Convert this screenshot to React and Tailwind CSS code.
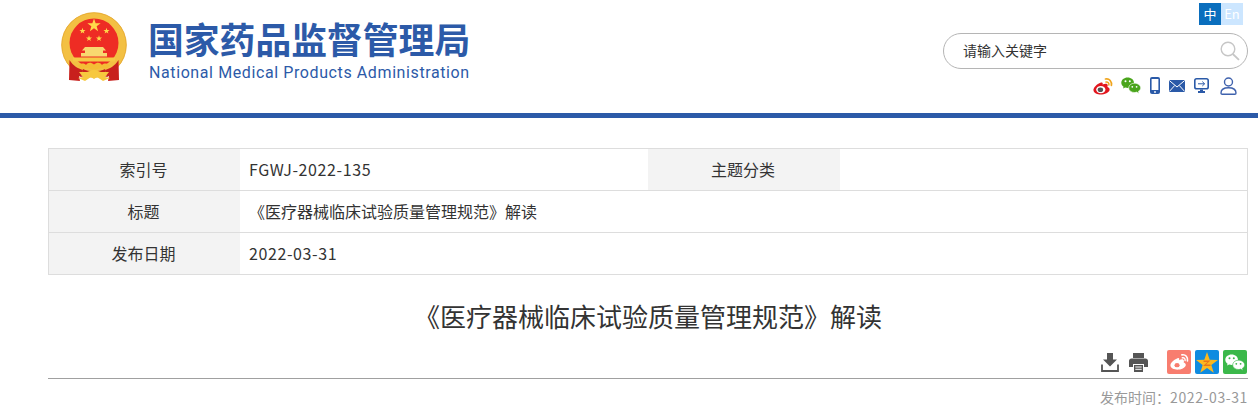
const CJK = { fontFamily: '"Noto Sans CJK SC", "Noto Sans", sans-serif' };

function Star({ cx, cy, r, fill = "#ffd84a", rot = 0 }) {
  const pts = [];
  for (let i = 0; i < 10; i++) {
    const rad = i % 2 === 0 ? r : r * 0.4;
    const a = ((-90 + rot + i * 36) * Math.PI) / 180;
    pts.push(`${(cx + rad * Math.cos(a)).toFixed(2)},${(cy + rad * Math.sin(a)).toFixed(2)}`);
  }
  return <polygon points={pts.join(" ")} fill={fill} />;
}

function Emblem() {
  return (
    <svg width="66" height="70" viewBox="0 0 66 70">
      <circle cx="33" cy="33" r="32.5" fill="#f3c043" />
      <circle cx="33" cy="33" r="32.3" fill="none" stroke="#e3a52c" strokeWidth="0.8" />
      <circle cx="33" cy="31" r="24.5" fill="#ee2c24" />
      <Star cx={33} cy={13.5} r={7} />
      <Star cx={21.5} cy={19} r={3.2} />
      <Star cx={45.5} cy={19} r={3.2} />
      <Star cx={28} cy={26.5} r={3.2} />
      <Star cx={38} cy={26.5} r={3.2} />
      <path d="M24 35 H42 L45 38.5 H42 V41 H46 V44.5 H20 V41 H24 V38.5 H21 Z" fill="#f8d870" />
      <path d="M12 45.5 H54 V49.5 H12 Z" fill="#f6c945" />
      <path d="M8.5 48 C12 54 18 57 22 58 L20 65 L18 64 L19 69 L8 68 Z" fill="#c8201d" />
      <path d="M57.5 48 C54 54 48 57 44 58 L46 65 L48 64 L47 69 L58 68 Z" fill="#c8201d" />
      <path d="M22 57 C27 60 39 60 44 57 L46 65 L39 63 L33 61 L27 63 L20 65 Z" fill="#c8201d" />
      <path d="M17 54 C19 51 23 51 25 53 C27 50 30 50 33 52.5 C36 50 39 50 41 53 C43 51 47 51 49 54 L45 57 L40 56 L33 58 L26 56 L21 57 Z" fill="#f4bd35" />
      <path d="M18 60 H26 L33 57.5 L40 60 H48 L44 65 L49 66 L42 69 L36 65 L33 67 L30 65 L24 69 L17 66 L22 65 Z" fill="#f7c83f" />
    </svg>
  );
}

function WeiboIcon({ color = "#e2161e", eye = "#555", wave = "#f0a51e", size = 20 }) {
  return (
    <svg width={size} height={size * 0.9} viewBox="0 0 20 18">
      <path d="M8 5.5 C3.5 7 0 11 0.5 13.5 C1 16.5 5 17.8 9 17.5 C13.5 17 17 14.6 16.6 12 C16.4 10.8 15.3 10.2 14.4 9.9 C14.9 8.6 14.8 7.5 14 7 C12.9 6.3 10.9 7 9.5 7.6 C10 6.4 9.9 5 8 5.5 Z" fill={color} />
      <ellipse cx="7.8" cy="12.6" rx="4.6" ry="3.6" fill="#fff" />
      <ellipse cx="7.4" cy="12.8" rx="2.7" ry="2.3" fill={eye} />
      <path d="M12.5 2 C16.5 1.2 19 4.5 18.4 8.4" fill="none" stroke={wave} strokeWidth="1.7" strokeLinecap="round" />
      <path d="M13 5 C15 4.6 16.2 6.2 15.9 8" fill="none" stroke={wave} strokeWidth="1.5" strokeLinecap="round" />
    </svg>
  );
}

function WechatIcon({ c1 = "#4aa51c", c2 = "#4aa51c", dot = "#fff", w = 20, h = 17 }) {
  return (
    <svg width={w} height={h} viewBox="0 0 20 17">
      <path d="M6.6 0.5 C3 0.5 0.3 2.8 0.3 5.7 C0.3 7.3 1.2 8.7 2.6 9.7 L2 11.6 L4.2 10.5 C5.2 10.8 6 10.9 7 10.9 C8 10.9 13 8 13 5.7 C13 2.8 10.2 0.5 6.6 0.5 Z" fill={c1} />
      <path d="M13.4 6.2 C10.2 6.2 7.7 8.3 7.7 10.9 C7.7 13.5 10.2 15.5 13.4 15.5 C14.2 15.5 14.9 15.4 15.6 15.1 L18 16.6 L17.4 14.3 C18.8 13.4 19.7 12.2 19.7 10.9 C19.7 8.3 16.7 6.2 13.4 6.2 Z" fill={c2} stroke={dot} strokeWidth="0.6" />
      <circle cx="4.5" cy="4.2" r="1" fill={dot} />
      <circle cx="8.8" cy="4.2" r="1" fill={dot} />
      <circle cx="11.3" cy="9.8" r="0.9" fill={dot} />
      <circle cx="15.6" cy="9.8" r="0.9" fill={dot} />
    </svg>
  );
}

function Phone() {
  return (
    <svg width="10" height="17" viewBox="0 0 10 17">
      <rect x="0" y="0" width="10" height="17" rx="2" fill="#2b5aa8" />
      <rect x="1.6" y="2" width="6.8" height="11" fill="#fff" />
      <circle cx="5" cy="15" r="0.9" fill="#fff" />
    </svg>
  );
}

function Mail() {
  return (
    <svg width="16" height="12" viewBox="0 0 16 12">
      <rect width="16" height="12" rx="0.5" fill="#2b5aa8" />
      <path d="M0.3 0.5 L8 7 L15.7 0.5 M0.3 11.5 L5.7 5.5 M15.7 11.5 L10.3 5.5" fill="none" stroke="#fff" strokeWidth="1" />
    </svg>
  );
}

function Monitor() {
  return (
    <svg width="15" height="15" viewBox="0 0 15 15">
      <rect x="0.8" y="0.8" width="13.4" height="10" rx="1.8" fill="#fff" stroke="#2b5aa8" strokeWidth="1.6" />
      <path d="M4 5.8 H10.5 M8.3 3.6 L10.6 5.8 L8.3 8" fill="none" stroke="#2b5aa8" strokeWidth="1" />
      <path d="M6 11.5 H9 V13 H11 V15 H4 V13 H6 Z" fill="#2b5aa8" />
    </svg>
  );
}

function User() {
  return (
    <svg width="17" height="18" viewBox="0 0 17 18">
      <circle cx="8.5" cy="5" r="4" fill="none" stroke="#3f62ad" strokeWidth="1.4" />
      <path d="M1 16 C1 12.5 4 10.8 8.5 10.8 C13 10.8 16 12.5 16 16 C16 16.8 15.5 17.2 14.8 17.2 H2.2 C1.5 17.2 1 16.8 1 16 Z" fill="none" stroke="#3f62ad" strokeWidth="1.4" />
    </svg>
  );
}

function SearchGlyph() {
  return (
    <svg width="20" height="20" viewBox="0 0 20 20">
      <circle cx="8" cy="8" r="6.8" fill="none" stroke="#c6c6c6" strokeWidth="1.4" />
      <path d="M12.8 13 L19 18.8" stroke="#c6c6c6" strokeWidth="1.8" />
    </svg>
  );
}

function Download() {
  return (
    <svg width="18" height="19" viewBox="0 0 18 19">
      <path d="M6 0 H12 V6.5 H16 L9 13.5 L2 6.5 H6 Z" fill="#555" />
      <path d="M1 11.5 V18 H17 V11.5" fill="none" stroke="#555" strokeWidth="1.8" />
    </svg>
  );
}

function Printer() {
  return (
    <svg width="19" height="19" viewBox="0 0 19 19">
      <path d="M4 0 H15 V5 H4 Z" fill="#555" />
      <path d="M2.5 5.5 H16.5 C18 5.5 19 6.5 19 8 V14 H15 V11 H4 V14 H0 V8 C0 6.5 1 5.5 2.5 5.5 Z" fill="#555" />
      <path d="M5 12 H14 V19 H5 Z" fill="#555" />
      <path d="M6.3 14 H12.7 M6.3 16.3 H12.7" stroke="#fff" strokeWidth="1" />
    </svg>
  );
}

function QzoneTile() {
  return (
    <div className="w-6 h-6 rounded-[2px] bg-[#0f8be0] flex items-center justify-center">
      <svg width="22" height="21" viewBox="0 0 22 21">
        <Star cx={11} cy={11.5} r={11.5} fill="#fbb81e" />
        <path d="M7.5 8.5 H14.5 L10 12.5 H14.5 V14 H7 L11.5 10 H7.5 Z" fill="#e8751a" />
      </svg>
    </div>
  );
}

const LABEL = "bg-[#f3f3f3] flex items-center justify-center pb-[2px] pr-[2px]";
const VALUE = "pl-[9px] pr-[10px] pb-[2px] flex items-center";
const NUM = "tracking-[0.6px]";

export default function App() {
  return (
    <div className="w-[1258px] h-[413px] overflow-hidden bg-white text-[#333]" style={CJK}>
      <header className="h-[118px] border-b-[5px] border-[#2c5aa8] flex justify-between pl-[61px] pr-[10px]">
        <div className="flex pt-3">
          <Emblem />
          <div className="ml-[21px] pt-[5px] text-[#2c5aa8]">
            <div className="text-[35.8px] leading-[43px] font-bold whitespace-nowrap">国家药品监督管理局</div>
            <div className="pl-[1px] text-[16px] leading-[20px] mt-[3px] whitespace-nowrap tracking-[0.6px]" style={{ fontFamily: '"Roboto", sans-serif' }}>
              National Medical Products Administration
            </div>
          </div>
        </div>
        <div className="flex flex-col items-end w-[305px] pt-[3px]">
          <div className="flex mr-[5px] text-[13px] leading-[22px] text-white text-center">
            <div className="w-[22px] h-[22px] bg-[#0a6ebd]">中</div>
            <div className="w-[22px] h-[22px] bg-[#cce6ff]">En</div>
          </div>
          <div className="w-[305px] h-9 mt-2 border border-[#b5b5b5] rounded-[18px] flex items-center justify-between pl-[19px] pr-[7px]">
            <span className="text-[14px] text-[#333] pb-[2px]">请输入关键字</span>
            <SearchGlyph />
          </div>
          <div className="flex items-center mt-[7px] mr-[11px] h-[19px]">
            <WeiboIcon />
            <div className="ml-2"><WechatIcon /></div>
            <div className="ml-[9px]"><Phone /></div>
            <div className="ml-[9px]"><Mail /></div>
            <div className="ml-[9px]"><Monitor /></div>
            <div className="ml-[11px]"><User /></div>
          </div>
        </div>
      </header>

      <main className="pl-[48px] pr-[10px]">
        <div className="mt-[30px] border border-[#dddddd] text-[16px] text-[#333]">
          <div className="flex h-[42px] border-b border-[#dddddd]">
            <div className={`w-[191px] ${LABEL}`}>索引号</div>
            <div className={`w-[408px] ${VALUE} ${NUM}`}>FGWJ-2022-135</div>
            <div className={`w-[192px] ${LABEL}`}>主题分类</div>
            <div className="flex-1"></div>
          </div>
          <div className="flex h-[42px] border-b border-[#dddddd]">
            <div className={`w-[191px] ${LABEL}`}>标题</div>
            <div className={`flex-1 ${VALUE}`}>《医疗器械临床试验质量管理规范》解读</div>
          </div>
          <div className="flex h-[41px]">
            <div className={`w-[191px] ${LABEL}`}>发布日期</div>
            <div className={`flex-1 ${VALUE} ${NUM}`}>2022-03-31</div>
          </div>
        </div>

        <h1 className="mt-[22px] h-[42px] text-center text-[26px] leading-[38px] font-normal text-[#333] whitespace-nowrap">
          《医疗器械临床试验质量管理规范》解读
        </h1>

        <div className="mt-[11px] h-[29px] flex items-start justify-end border-b border-[#a0a0a0]">
          <div className="flex items-center h-6 mr-[1px]">
            <Download />
            <div className="ml-[10px]"><Printer /></div>
            <div className="ml-[19px] w-6 h-6 rounded-[2px] bg-[#f87d6f] flex items-center justify-center">
              <WeiboIcon color="#fff" eye="#f87d6f" wave="#fff" size={19} />
            </div>
            <div className="ml-[4px]"><QzoneTile /></div>
            <div className="ml-[4px] w-6 h-6 rounded-[2px] bg-[#3bb84a] flex items-center justify-center">
              <WechatIcon c1="#fff" c2="#fff" dot="#3bb84a" />
            </div>
          </div>
        </div>

        <div className="mt-[8px] text-right text-[14px] leading-5 text-[#999]">
          发布时间：<span className="tracking-[0.6px]">2022-03-31</span>
        </div>
      </main>
    </div>
  );
}
